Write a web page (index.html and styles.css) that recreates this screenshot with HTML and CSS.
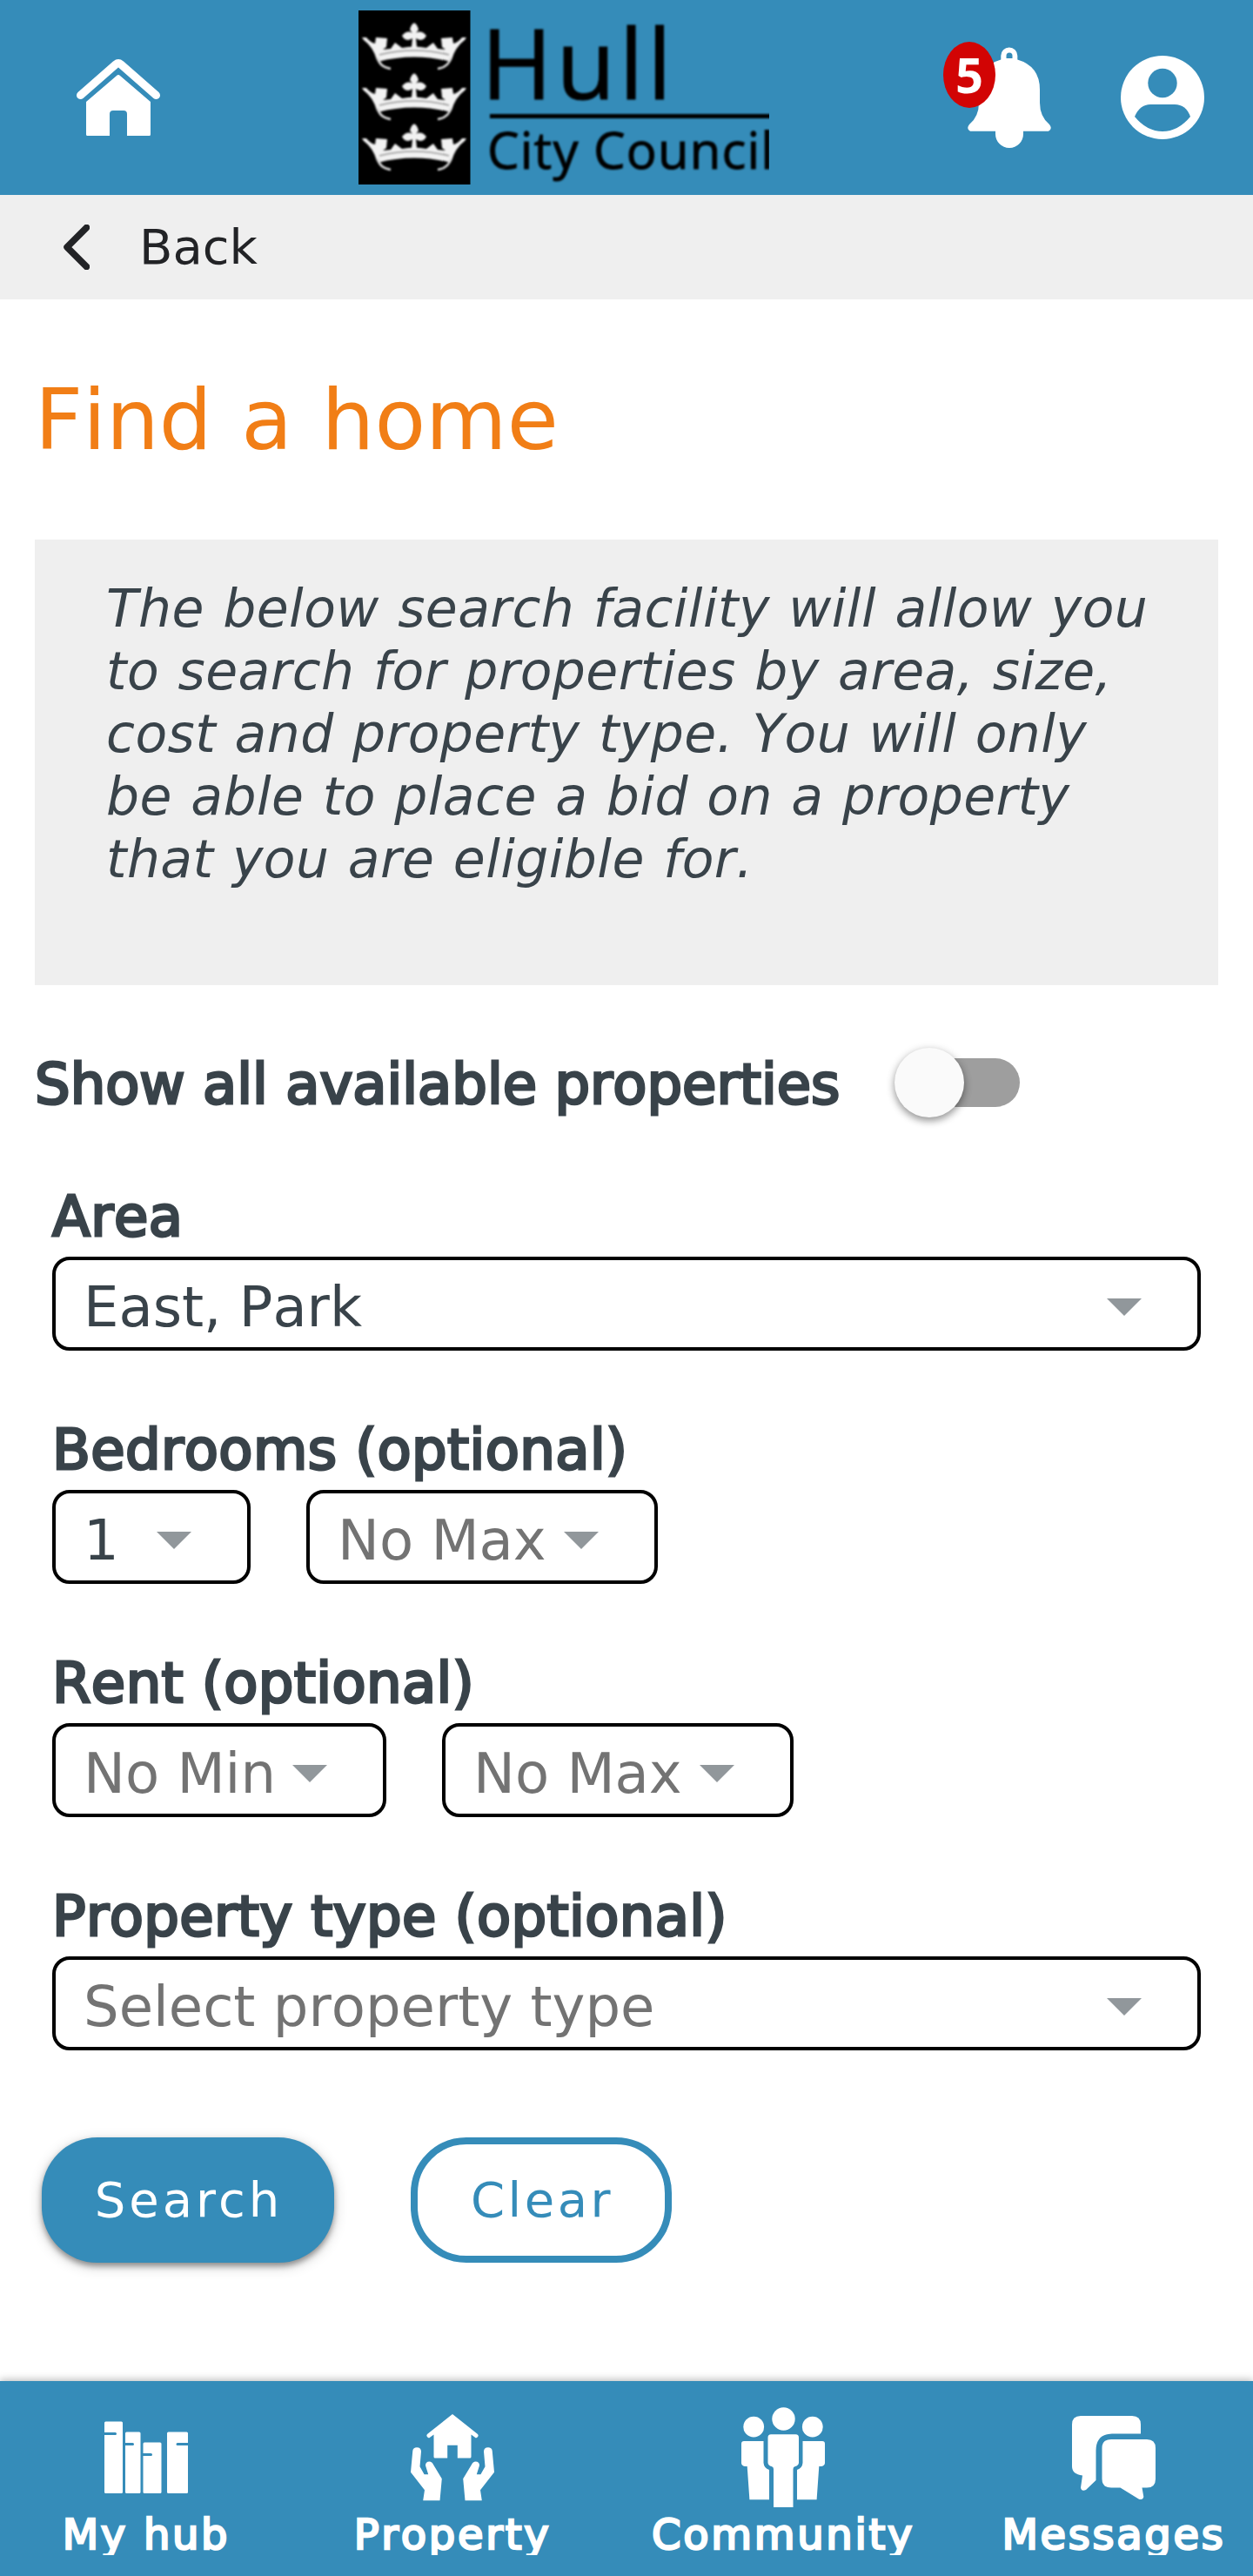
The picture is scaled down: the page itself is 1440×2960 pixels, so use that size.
FILE: index.html
```html
<!DOCTYPE html>
<html lang="en">
<head>
    <meta charset="UTF-8">
    <meta name="viewport" content="width=device-width, initial-scale=1.0">
    <title>Find a home - Hull City Council</title>
    <link rel="stylesheet" href="styles.css">
</head>
<body>

<header class="topbar">
    <a class="home" href="#" aria-label="Home">
        <svg width="96" height="88" viewBox="0 0 96 88">
            <path d="M4.5 41.5 L45 6 Q48 3.500 51 6 L91.500 41.500" fill="none" stroke="#fff" stroke-width="9" stroke-linecap="round" stroke-linejoin="round"/>
            <path d="M46 19 Q48 17 50 19 L85 49 V86.500 Q85 88 83.500 88 H58 V63 Q58 59 54 59 H42 Q38 59 38 63 V88 H12.500 Q11 88 11 86.500 V49 Z" fill="#fff"/>
        </svg>
    </a>

    <svg class="logo" width="472" height="200" viewBox="0 0 472 200" role="img" aria-label="Hull City Council">
        <defs>
            <g id="crown">
                <path d="M0 18 L5 18 Q10 24 15 25 L16 18 L29 19 L28 29 L24 32 L33 31 L38 24 L46 30 Q60 27 74 30 L82 24 L87 31 L96 32 L92 29 L91 19 L104 18 L105 25 Q110 24 115 18 L120 18 L118 21 Q107 29 103 44 Q60 30 17 44 Q13 29 2 21 Z"/>
                <path d="M17 41 Q60 28 103 41 L102 46 Q60 35 18 46 Z"/>
                <path d="M18 41 Q20 52 33 54 M102 41 Q100 52 87 54" fill="none" stroke="#ddd" stroke-width="2.500"/>
                <path d="M20 38 Q60 28 100 38" fill="none" stroke="#999" stroke-width="1.500"/>
                <path d="M56 6 Q60 -3 64 6 L65 9 L62 13 Q68 9 74 16 Q70 24 62 19 L63 29 H57 L58 19 Q50 24 46 16 Q52 9 58 13 L55 9 Z"/>
            </g>
        </defs>
        <rect width="128.500" height="200"/>
        <g class="logo-art">
            <use href="#crown" x="4" y="13" fill="#f2f2f2"/>
            <use href="#crown" x="4" y="71" fill="#f2f2f2"/>
            <use href="#crown" x="4" y="129" fill="#f2f2f2"/>
            <text class="logo-name" x="141" y="102" textLength="219">Hull</text>
            <rect x="151" y="119" width="330" height="5"/>
            <text class="logo-sub" x="148" y="182" textLength="329">City Council</text>
        </g>
    </svg>

    <div class="top-actions">
        <a class="alerts" href="#" aria-label="Notifications">
            <svg width="96" height="116" viewBox="0 0 96 116" fill="#fff">
                <path fill-rule="evenodd" d="M38.300 14.500 V10 a9.500 9.500 0 0 1 19 0 V14.500 Q83 22 83 49 V64 Q83 80 94 89 Q98 94 93 96.700 H64 V100 a16 16 0 0 1 -32 0 V96.700 H3 Q-2 94 2 89 Q13 80 13 64 V49 Q13 22 38.300 14.500 Z M44.500 13 H51.500 V10 a3.500 3.500 0 0 0 -7 0 Z"/>
            </svg>
            <span class="badge">5</span>
        </a>
        <a href="#" aria-label="My account">
            <svg width="96" height="96" viewBox="0 0 96 96">
                <circle cx="48" cy="48" r="48" fill="#fff"/>
                <circle cx="48" cy="31.500" r="16.700" fill="#358cb9"/>
                <path d="M16 70 Q22 56 34 56 H62 Q75 56 80 70 Q66 87 48 87 Q30 87 16 70 Z" fill="#358cb9"/>
            </svg>
        </a>
    </div>
</header>

<a class="back" href="#">
    <svg width="30" height="52" viewBox="0 0 30 52">
        <path d="M26.500 3.500 L4 26 L26.500 48.500" fill="none" stroke="#222326" stroke-width="7.500" stroke-linecap="round" stroke-linejoin="round"/>
    </svg>
    <span>Back</span>
</a>

<main>
    <h1>Find a home</h1>

    <p class="note">The below search facility will allow you<br>to search for properties by area, size,<br>cost and property type. You will only<br>be able to place a bid on a property<br>that you are eligible for.</p>

    <div class="toggle-row">
        <span class="label">Show all available properties</span>
        <span class="toggle"><span class="thumb"></span></span>
    </div>

    <div class="field">
        <div class="label">Area</div>
        <div class="select wide"><span>East, Park</span><i class="arrow"></i></div>
    </div>

    <div class="field">
        <div class="label">Bedrooms (optional)</div>
        <div class="pair">
            <div class="select tiny"><span>1</span><i class="arrow"></i></div>
            <div class="select max empty"><span>No Max</span><i class="arrow"></i></div>
        </div>
    </div>

    <div class="field">
        <div class="label">Rent (optional)</div>
        <div class="pair">
            <div class="select min empty"><span>No Min</span><i class="arrow"></i></div>
            <div class="select max empty"><span>No Max</span><i class="arrow"></i></div>
        </div>
    </div>

    <div class="field">
        <div class="label">Property type (optional)</div>
        <div class="select wide empty"><span>Select property type</span><i class="arrow"></i></div>
    </div>

    <div class="buttons">
        <button class="btn btn-search">Search</button>
        <button class="btn btn-clear">Clear</button>
    </div>
</main>

<nav class="tabs">
    <a href="#">
        <svg width="96" height="120" viewBox="0 0 96 120" fill="#fff">
            <rect x="0" y="18.500" width="21" height="82.500" rx="1.500"/>
            <rect x="24" y="30.500" width="17.500" height="70.500" rx="1.500"/>
            <rect x="44.500" y="42.500" width="21" height="58.500" rx="1.500"/>
            <rect x="72" y="30.500" width="24" height="70.500" rx="1.500"/>
            <path d="M0 32.500 H12.500 M24 44.500 H32.500 M44 56.500 H53.500 M96 44.500 H84" stroke="#358cb9" stroke-width="3" stroke-linecap="round"/>
        </svg>
        <span>My hub</span>
    </a>
    <a href="#">
        <svg width="96" height="120" viewBox="0 0 96 120" fill="#fff">
            <path d="M48 10 L77 33 Q79 36 75 37.500 L69.500 33.500 V59 Q69.500 60.500 68 60.500 H53.800 V45.700 H42.200 V60.500 H28 Q26.500 60.500 26.500 59 V33.500 L21 37.500 Q17 36 19 33 Z"/>
            <path id="hand" d="M2.300 52 Q3 48.300 7 48.300 Q12 48.500 12 53 L10.500 70.300 L15.600 79.300 H20.200 L17 69 Q17 64.500 21.500 64.500 Q24.500 64.500 26 68 L35.800 84.300 L33.500 109.300 H14.200 L16 97.300 L0 76.700 Z"/>
            <use href="#hand" transform="translate(96 0) scale(-1 1)"/>
        </svg>
        <span>Property</span>
    </a>
    <a href="#">
        <svg width="96" height="120" viewBox="0 0 96 120" fill="#fff">
            <circle cx="48.500" cy="15.500" r="13.200"/>
            <circle cx="14.200" cy="24.700" r="11.900"/>
            <circle cx="81.800" cy="24.700" r="11.900"/>
            <path d="M34 33.300 H62.500 Q66 33.300 66 37 V66 Q65.500 69 62 70 Q59.500 70.500 59.500 73 V117 H37 V73 Q37 70.500 34.500 70 Q31 69 30.500 66 V37 Q30.500 33.300 34 33.300 Z"/>
            <path id="side" d="M3 41 H25.500 V66 Q26 72 32 74 V108.300 H9.400 L6.700 70 H4 Q0 69 0 66 V44 Q0 41 3 41 Z"/>
            <use href="#side" transform="translate(96 0) scale(-1 1)"/>
        </svg>
        <span>Community</span>
    </a>
    <a href="#">
        <svg width="96" height="120" viewBox="0 0 96 120" fill="#fff">
            <path d="M10 12 H69 Q79 12 79 22 V32.500 H46 Q27.500 33 27.500 52 V86 L16 97 Q11 99.500 10 94.500 L12 80.500 Q0 79 0 70 V22 Q0 12 10 12 Z"/>
            <path d="M45 39 H86 Q96 39 96 49 V84.500 Q96 94.500 86 94.500 H80.500 L82.300 105 Q81.500 109 77 107.700 L55.500 94.500 H45 Q34.500 94.500 34.500 84.500 V49 Q34.500 39 45 39 Z"/>
        </svg>
        <span>Messages</span>
    </a>
</nav>

</body>
</html>
```

FILE: styles.css
```css
* {
    box-sizing: border-box;
}
body {
    margin: 0;
    min-height: 2960px;
    display: flex;
    flex-direction: column;
    background-color: #fff;
    color: #39434a;
    font-family: Verdana, "DejaVu Sans", sans-serif;
    font-kerning: none;
}
a {
    color: inherit;
    text-decoration: none;
}
svg {
    display: block;
}

/* Header */
.topbar {
    display: flex;
    align-items: center;
    height: 224px;
    padding: 0 56px 0 88px;
    background-color: #358cb9;
}
.logo {
    margin-left: 228px;
    overflow: hidden;
}
.logo-art {
    filter: blur(1px);
}
.logo-name, .logo-sub {
    font-family: "Open Sans", "Noto Sans", sans-serif;
    stroke: #000;
}
.logo-name {
    font-size: 111px;
}
.logo-sub {
    font-size: 58px;
}
.top-actions {
    display: flex;
    align-items: center;
    gap: 80px;
    margin-left: auto;
}
.alerts {
    position: relative;
}
.badge {
    position: absolute;
    left: -28px;
    top: -6px;
    width: 60px;
    height: 76px;
    border-radius: 50%;
    background-color: #d20404;
    color: #fff;
    font-family: "Noto Sans", sans-serif;
    font-size: 56px;
    font-weight: bold;
    line-height: 74px;
    text-align: center;
}
.back {
    display: flex;
    align-items: center;
    gap: 57px;
    height: 120px;
    padding-left: 73px;
    background-color: #efefef;
    color: #222326;
    font-size: 56px;
}
.back span {
    padding-bottom: 2px;
}

/* Search form */
main {
    flex: 1;
    padding: 80px 40px 0;
}
h1 {
    margin: 0 0 80px;
    color: #f17e16;
    font-size: 96px;
    font-weight: normal;
    line-height: 118px;
    height: 116px;
    word-spacing: 3px;
}
.note {
    height: 512px;
    margin: 0 0 72px;
    padding: 43px 0 0 82px;
    background-color: #efefef;
    font-size: 60px;
    font-style: italic;
    line-height: 72px;
    letter-spacing: 0.4px;
    word-spacing: 2px;
    white-space: nowrap;
}
.label {
    height: 90px;
    font-size: 64px;
    line-height: 88px;
    white-space: nowrap;
    -webkit-text-stroke: 3px #39434a;
}
.toggle-row {
    display: flex;
    align-items: center;
    height: 80px;
}
.toggle-row .label {
    width: 996px;
    padding-top: 3px;
}
.toggle {
    width: 136px;
    height: 56px;
    border-radius: 28px;
    background-color: #9e9e9e;
}
.thumb {
    display: block;
    width: 80px;
    height: 80px;
    margin: -12px 0 0 -8px;
    border-radius: 50%;
    background-color: #fafafa;
    box-shadow: 0 4px 8px rgba(0, 0, 0, 0.35), 0 2px 12px rgba(0, 0, 0, 0.12);
}
.field {
    margin: 70px 20px 0;
}
.field .label {
    letter-spacing: 0.4px;
}
.pair {
    display: flex;
    gap: 64px;
}
.select {
    display: flex;
    align-items: center;
    justify-content: space-between;
    height: 108px;
    padding: 0 64px 0 32px;
    border: 4px solid #000;
    border-radius: 20px;
    font-size: 64px;
    white-space: nowrap;
}
.select span {
    padding-top: 7px;
}
.select.empty {
    color: #737373;
}
.arrow {
    margin-top: 8px;
    border: 20px solid transparent;
    border-top-color: #91979b;
    border-bottom: 0;
}
.tiny {
    width: 228px;
}
.min {
    width: 384px;
}
.max {
    width: 404px;
}
.buttons {
    display: flex;
    gap: 88px;
    margin: 100px 8px 0;
}
.btn {
    width: 336px;
    height: 144px;
    padding: 0 0 2px 2px;
    border: none;
    border-radius: 64px;
    background-color: #358cb9;
    color: #fff;
    font-family: inherit;
    font-size: 56px;
    letter-spacing: 4px;
}
.btn-search {
    box-shadow: 0 4px 6px rgba(0, 0, 0, 0.35), 0 4px 16px rgba(0, 0, 0, 0.2);
}
.btn-clear {
    width: 300px;
    border: 8px solid #358cb9;
    background-color: #fff;
    color: #358cb9;
    letter-spacing: 3.5px;
}

/* Bottom navigation */
.tabs {
    display: grid;
    grid-template-columns: 336px 368px 392px 344px;
    height: 224px;
    padding-top: 28px;
    background-color: #358cb9;
    color: #fff;
    box-shadow: 0 -2px 8px rgba(0, 0, 0, 0.25);
}
.tabs a {
    display: flex;
    flex-direction: column;
    align-items: center;
}
.tabs a:last-child {
    padding-left: 24px;
}
.tabs span {
    height: 52px;
    overflow: hidden;
    font-size: 48px;
    line-height: 56px;
    letter-spacing: 2.7px;
    -webkit-text-stroke: 2.5px #fff;
}
```
